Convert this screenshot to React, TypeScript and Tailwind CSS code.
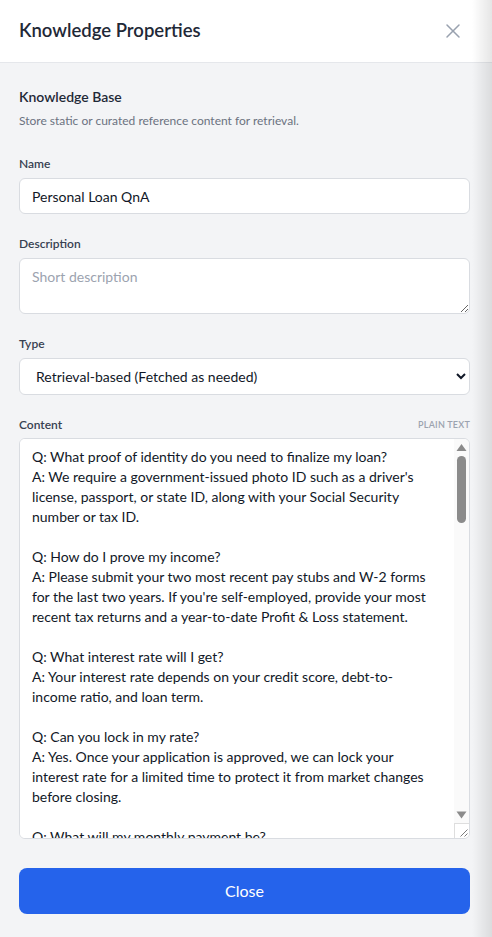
import React from 'react'
import { X } from 'lucide-react'

const content = `Q: What proof of identity do you need to finalize my loan?
A: We require a government-issued photo ID such as a driver's
license, passport, or state ID, along with your Social Security
number or tax ID.

Q: How do I prove my income?
A: Please submit your two most recent pay stubs and W-2 forms
for the last two years. If you're self-employed, provide your most
recent tax returns and a year-to-date Profit & Loss statement.

Q: What interest rate will I get?
A: Your interest rate depends on your credit score, debt-to-
income ratio, and loan term.

Q: Can you lock in my rate?
A: Yes. Once your application is approved, we can lock your
interest rate for a limited time to protect it from market changes
before closing.

Q: What will my monthly payment be?
A: Your monthly payment depends on the loan amount, interest
rate, and term you choose. We'll show you an estimate before
you sign anything.

Q: How much can I borrow?
A: Personal loans range from $2,000 to $50,000, depending on
your income, credit history, and existing debt.

Q: Can I pay off my loan early?
A: Yes. There are no prepayment penalties, so you can pay off
your balance at any time.`

// fake classic scrollbar drawn beside the text area
function ScrollRail() {
    return (
        <div className="flex w-[15px] shrink-0 flex-col bg-[#fafafa]">
            <div className="h-4 shrink-0">
                <svg width="15" height="16" viewBox="0 0 15 16">
                    <polygon points="2.5,12 7.5,5 12.5,12" fill="#8b8b8b" />
                </svg>
            </div>
            <div className="flex-1">
                <div className="mx-[3px] mt-px h-[67px] rounded-full bg-[#8b8b8b]" />
            </div>
            <div className="h-4 shrink-0">
                <svg width="15" height="16" viewBox="0 0 15 16">
                    <polygon points="2.5,4.5 12.5,4.5 7.5,11.5" fill="#8b8b8b" />
                </svg>
            </div>
            <div className="h-[15px] shrink-0 border-l border-t border-[#dedede] bg-white">
                <svg width="14" height="14" viewBox="0 0 14 14">
                    <path d="M12.5 5.5 5.5 12.5M12.5 9.5 9.5 12.5" stroke="#7a7a7a" strokeWidth="1" />
                </svg>
            </div>
        </div>
    )
}

export default function App() {
    return (
        <div className="relative flex h-[937px] w-full flex-col overflow-hidden bg-[#f3f4f6] font-['Lato','Noto_Sans',sans-serif]">
            {/* Header */}
            <div className="flex h-[63px] shrink-0 items-center justify-between border-b border-[#e5e7eb] bg-white pl-[19px] pr-[27px]">
                <h2 className="text-[18.5px] font-semibold text-[#1f2937]">Knowledge Properties</h2>
                <button className="text-gray-400">
                    <X size={24} strokeWidth={1.5} />
                </button>
            </div>

            {/* Body */}
            <div className="flex flex-1 flex-col pl-[19px] pr-[22px] pt-6">
                <h3 className="text-sm font-semibold leading-5 text-[#1f2937]">Knowledge Base</h3>
                <p className="mt-1.5 text-xs leading-4 text-[#6b7280]">Store static or curated reference content for retrieval.</p>

                <div className="mt-[27px] flex flex-col gap-[22px]">
                    <div>
                        <label className="mb-1.5 block text-xs font-semibold leading-4 text-[#374151]">Name</label>
                        <input
                            defaultValue="Personal Loan QnA"
                            className="h-9 w-full rounded-md border border-[#d9dce1] bg-white px-3 text-sm text-[#111827] outline-none"
                        />
                    </div>
                    <div>
                        <label className="mb-1.5 block text-xs font-semibold leading-4 text-[#374151]">Description</label>
                        <textarea
                            placeholder="Short description"
                            className="block h-14 w-full rounded-md border border-[#d9dce1] bg-white px-3 py-2 text-sm leading-5 text-[#111827] outline-none placeholder:text-[#9ca3af]"
                        />
                    </div>
                    <div>
                        <label className="mb-1.5 block text-xs font-semibold leading-4 text-[#374151]">Type</label>
                        <select className="h-[37px] w-full rounded-md border border-[#d9dce1] bg-white px-3 text-sm text-[#111827] outline-none">
                            <option>Retrieval-based (Fetched as needed)</option>
                            <option>Static (Always included)</option>
                        </select>
                    </div>
                    <div>
                        <div className="mb-[5px] flex items-center justify-between">
                            <label className="text-xs font-semibold leading-4 text-[#374151]">Content</label>
                            <span className="text-[9px] font-semibold uppercase tracking-wide text-[#9ca3af]">Plain text</span>
                        </div>
                        <div className="flex h-[401px] overflow-hidden rounded-md border border-[#d9dce1] bg-white">
                            <textarea
                                defaultValue={content}
                                className="block min-w-0 flex-1 resize-none overflow-hidden bg-white px-3 py-2 text-sm leading-5 text-[#111827] outline-none"
                            />
                            <ScrollRail />
                        </div>
                    </div>
                </div>

                <button className="mt-[29px] h-[46px] w-full rounded-lg bg-[#2563eb] text-base text-white">Close</button>
            </div>

            {/* right edge shade */}
            <div className="pointer-events-none absolute inset-y-0 right-0 w-5 bg-gradient-to-l from-black/10 to-transparent" />
        </div>
    )
}
